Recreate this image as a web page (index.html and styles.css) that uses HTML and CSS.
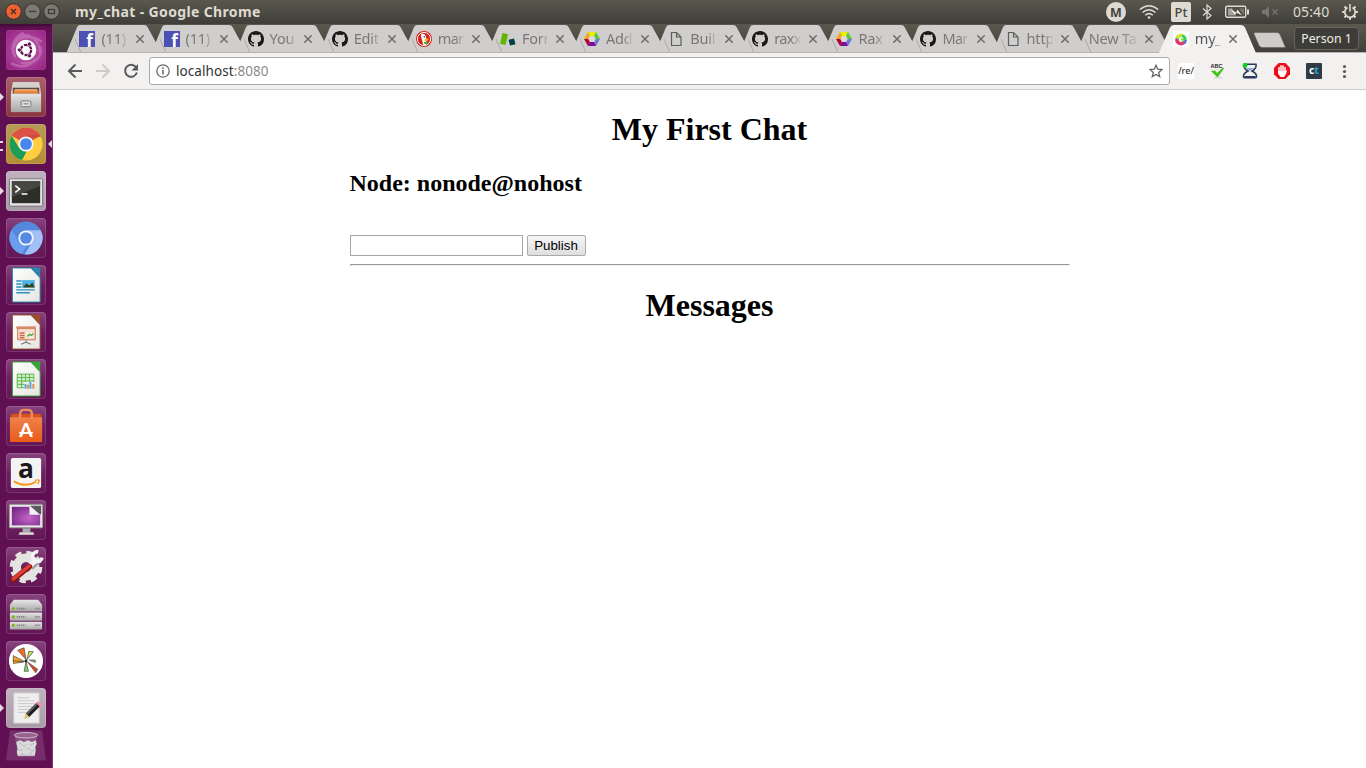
FILE: index.html
```html
<!DOCTYPE html>
<html lang="en">
<head>
<meta charset="utf-8">
<title>my_chat</title>
<link rel="stylesheet" href="styles.css">
</head>
<body>
<svg class="defs" width="0" height="0">
  <defs>
    <linearGradient id="silver" x1="0" y1="0" x2="0" y2="1"><stop offset="0" stop-color="#e6e6e6"/><stop offset="1" stop-color="#a6a6a6"/></linearGradient>
    <linearGradient id="paper" x1="0" y1="0" x2="1" y2="1"><stop offset="0" stop-color="#fff"/><stop offset="1" stop-color="#e4e4e0"/></linearGradient>
    <linearGradient id="bag" x1="0" y1="0" x2="0" y2="1"><stop offset="0" stop-color="#f0824a"/><stop offset="1" stop-color="#e95b1b"/></linearGradient>
    <radialGradient id="screen" cx=".6" cy=".6" r=".8"><stop offset="0" stop-color="#c366c9"/><stop offset="1" stop-color="#6e2180"/></radialGradient>
    <radialGradient id="swirl" cx=".5" cy=".5" r=".6"><stop offset="0" stop-color="#d48bcb"/><stop offset="1" stop-color="#9b2587"/></radialGradient>
  </defs>
  <symbol id="fb" viewBox="0 0 16 16"><rect width="16" height="16" fill="#4e50b4"/><text x="7.200" y="15.500" font-family="Open Sans" font-weight="700" font-size="17" fill="#fff">f</text></symbol>
  <symbol id="gh" viewBox="0 0 16 16"><path fill="#1b1817" d="M8 0C3.58 0 0 3.58 0 8c0 3.54 2.29 6.53 5.47 7.59.4.07.55-.17.55-.38 0-.19-.01-.82-.01-1.49-2.01.37-2.53-.49-2.69-.94-.09-.23-.48-.94-.82-1.13-.28-.15-.68-.52-.01-.53.63-.01 1.08.58 1.23.82.72 1.21 1.87.87 2.33.66.07-.52.28-.87.51-1.07-1.78-.2-3.64-.89-3.64-3.95 0-.87.31-1.59.82-2.15-.08-.2-.36-1.02.08-2.12 0 0 .67-.21 2.2.82.64-.18 1.32-.27 2-.27.68 0 1.36.09 2 .27 1.53-1.04 2.2-.82 2.2-.82.44 1.1.16 1.92.08 2.12.51.56.82 1.27.82 2.15 0 3.07-1.87 3.75-3.65 3.95.29.25.54.73.54 1.48 0 1.07-.01 1.93-.01 2.2 0 .21.15.46.55.38A8.013 8.013 0 0016 8c0-4.42-3.58-8-8-8z"/></symbol>
  <symbol id="duck" viewBox="0 0 16 16"><circle cx="8" cy="8" r="8" fill="#d8201c"/><circle cx="8" cy="8" r="6.6" fill="#d8201c" stroke="#fff" stroke-width="1"/><path d="M5 3.2c2-1.200 5 .2 5 3.300l.5 2-.5 5.800-2.600-.2C6.600 10.500 4.800 6.500 5 3.200z" fill="#fff"/><path d="M8.500 8l4.500-.6-1.500 2.400-3 .3z" fill="#f9bd12"/><path d="M8 11l3.500-.5v2.700L8 12.800z" fill="#4cab3c"/><circle cx="8.300" cy="5.900" r=".8" fill="#234e9b"/></symbol>
  <symbol id="form" viewBox="0 0 16 16"><path d="M2.500 2L8 3.200 5.500 14 0 12.800z" fill="#62b400"/><path d="M8.500 8.700l5.500-1.200 1.500 5.700-5.500 1.300z" fill="#003f48"/></symbol>
  <symbol id="hex" viewBox="0 0 16 16"><path d="M4 1h8l-2 4H6z" fill="#e9f000"/><path d="M12 1l4 7h-4.500L10 5z" fill="#5ac83a"/><path d="M16 8l-4 7-2-4 1.500-3z" fill="#6b7bd0"/><path d="M12 15H4l2-4h4z" fill="#7b0a9b"/><path d="M4 15L0 8h4.500L6 11z" fill="#b5002f"/><path d="M0 8l4-7 2 4-1.500 3z" fill="#f0a814"/><path d="M6 5h4l1.500 3-1.500 3H6L4.500 8z" fill="#dcdad8"/></symbol>
  <symbol id="doc" viewBox="0 0 16 16"><path d="M3.500 1.500h5l4.500 4.500v8.500H3.500z M8.500 1.500v4.500H13" fill="none" stroke="#5d5d5d" stroke-width="1.200"/></symbol>
  <symbol id="x" viewBox="0 0 8 8"><path d="M.3.300l7.400 7.400M7.700.300l-7.400 7.400" stroke="#6f6d6b" stroke-width="1.500" fill="none"/></symbol>
  <symbol id="shape" viewBox="0 0 98 28"><path d="M0 28L10.500 2.500Q11.500 0 14 0H80Q83 0 84 2.500L98 28z" fill="#d0cecc"/><path d="M8.500 14.500L14.500 28" stroke="#aaa8a5" fill="none"/></symbol>
</svg>

<header class="panel">
  <div class="winbtns">
    <svg width="58" height="20" viewBox="0 0 58 20"><circle cx="8.500" cy="9.500" r="7.800" fill="#ed6134" stroke="#33322d"/><path d="M6 7l5 5M11 7l-5 5" stroke="#47301f" stroke-width="1.400"/><circle cx="27.500" cy="9.500" r="7.800" fill="#7b7a72" stroke="#33322d"/><path d="M24 9.500h7" stroke="#3b3a36" stroke-width="1.300"/><circle cx="46.500" cy="9.500" r="7.800" fill="#7b7a72" stroke="#33322d"/><rect x="43.500" y="7.500" width="6" height="4" fill="none" stroke="#3b3a36" stroke-width="1.200"/></svg>
  </div>
  <span class="wintitle">my_chat - Google Chrome</span>
  <div class="tray">
    <svg class="mega" width="20" height="20" viewBox="0 0 20 20"><circle cx="10" cy="10" r="10" fill="#dfdbd2"/><text x="10" y="14.500" text-anchor="middle" font-family="Open Sans" font-weight="700" font-size="12.500" fill="#45443f">M</text></svg>
    <svg class="wifi" width="20" height="16" viewBox="0 0 20 16" fill="none" stroke="#dfdbd2" stroke-width="1.500"><path d="M.8 5.500Q10-2 19.200 5.500M3.500 8.500Q10 3 16.500 8.500M6.200 11.300q3.800-3.300 7.600 0"/><circle cx="10" cy="13.500" r="1.300" fill="#dfdbd2" stroke="none"/></svg>
    <span class="kbd">Pt</span>
    <svg class="bt" width="12" height="16" viewBox="0 0 12 16" fill="none" stroke="#dfdbd2" stroke-width="1.200"><path d="M2 4.500l8 7L6 15V1l4 3.500-8 7"/></svg>
    <svg class="bat" width="24" height="14" viewBox="0 0 24 14"><rect x=".7" y="1.200" width="20" height="11" rx="1.500" fill="none" stroke="#dfdbd2" stroke-width="1.400"/><path d="M22 4.500h2v5h-2z" fill="#dfdbd2"/><path d="M3 3.500h4l4 7H3z" fill="#a3a199"/><path d="M14 3.500h5v7z" fill="#77756e"/><path d="M5 3.500l6 4 1.500-3L17 10.500l-5.500-2.800-1.500 2.300z" fill="#eeeae0"/></svg>
    <svg class="mute" width="18" height="14" viewBox="0 0 18 14"><path d="M1 5h3l4-4v12L4 9H1z" fill="#77756e"/><path d="M11.500 4.500l5 5M16.500 4.500l-5 5" stroke="#77756e" stroke-width="1.300"/></svg>
    <span class="clock">05:40</span>
    <svg class="gear" width="18" height="18" viewBox="0 0 18 18" fill="none" stroke="#dfdbd2"><path d="M6.500 4.500a5.200 5.200 0 1 0 5 0" stroke-width="1.700"/><path d="M9 1v7.500" stroke-width="1.600"/><path d="M1.200 9h2.300M14.500 9h2.300M3.500 3.500l1.700 1.700M14.500 3.500l-1.700 1.700M3.500 14.500l1.700-1.700M14.500 14.500l-1.700-1.700M9 14.500v2.300" stroke-width="2"/></svg>
  </div>
</header>

<div class="desktop">
  <nav class="launcher">
    <div class="tile dash"><svg viewBox="0 0 41 41"><rect width="41" height="41" fill="url(#swirl)" opacity=".6"/><path d="M8 18C10 6 24 4 37 12M35 17c3 12-8 19-20 17M10 28C3 18 9 7 18 3M30 30c-7 9-16 9-25 4M13 6c11-3 21 3 22 17" fill="none" stroke="#e3a9da" stroke-width="2.500" opacity=".35"/><circle cx="20.500" cy="20.500" r="10.500" fill="#fff"/><circle cx="20.500" cy="20.500" r="5.300" fill="none" stroke="#5e1150" stroke-width="2.400" stroke-dasharray="9.600 1.500"/><g fill="#5e1150" stroke="#fff" stroke-width=".7"><circle cx="13.700" cy="20.500" r="2.100"/><circle cx="24" cy="14.500" r="2.100"/><circle cx="24" cy="26.500" r="2.100"/></g></svg></div>
    <div class="tile files run"><svg viewBox="0 0 41 41"><path d="M7 5h27l2 12H5z" fill="#d5d2cd"/><path d="M7 11h27v7H7z" fill="#5b4a40"/><path d="M8 13.500h25V17H8z" fill="#ef8337"/><path d="M9 12.500h23V14H9z" fill="#f6b98a"/><path d="M5 17h31v19H5z" fill="url(#silver)"/><rect x="15.500" y="24.500" width="10" height="6" rx="1" fill="#ddd" stroke="#797979"/><path d="M18 27.500h5" stroke="#777"/></svg></div>
    <div class="tile chrome run multi active"><svg viewBox="0 0 41 41"><circle cx="20.500" cy="20.500" r="17" fill="#ffcd40"/><path d="M20.500 20.500L5.800 12a17 17 0 0 1 29.400 0z" fill="#dc5246"/><path d="M5.800 12l7.700 12.500 7.500 4-4.500 8.500A17 17 0 0 1 5.800 12z" fill="#199d59"/><path d="M20.500 12.500H35.500" stroke="#b7473b"/><circle cx="20.500" cy="20.500" r="7.800" fill="#f3f3f3"/><circle cx="20.500" cy="20.500" r="6" fill="#4587ef"/></svg></div>
    <div class="tile term run"><svg viewBox="0 0 41 41"><rect x="3.500" y="8" width="34" height="28" rx="1" fill="#e4e4e4" stroke="#777"/><rect x="6" y="10.500" width="29" height="22.500" fill="#2d2d2a"/><path d="M6 10.500h29v5L6 27z" fill="#464642"/><path d="M9.500 15l4.500 3.500-4.500 3.500M16 23.500h6" fill="none" stroke="#fff" stroke-width="1.600"/></svg></div>
    <div class="tile"><svg viewBox="0 0 41 41"><circle cx="20.500" cy="20.500" r="17" fill="#5488dc"/><path d="M20.500 12.500h15A17 17 0 0 1 19 37.400l8-13z" fill="#a2c0f6"/><path d="M5.800 12l7.700 12.500 7.500 4-4.500 8.500A17 17 0 0 1 5.800 12z" fill="#6b9eee"/><circle cx="20.500" cy="20.500" r="7.800" fill="#f4f7ff"/><circle cx="20.500" cy="20.500" r="6" fill="#568be1"/></svg></div>
    <div class="tile"><svg viewBox="0 0 41 41"><path d="M6.500 3h19L35 13v25H6.500z" fill="url(#paper)" stroke="#25789b"/><path d="M25 2.500h10V13z" fill="#2a86ad"/><path d="M16.500 15.500h13V23h-13z" fill="#4fb2e5"/><path d="M17 23l4-4 3 2 3-3 2.500 5z" fill="#34451e"/><path d="M10.500 16.500H16M10.500 19.500H16M10.500 22.500H16M10.500 25.500h19M10.500 28.500h14" stroke="#2991bd" stroke-width="1.500"/></svg></div>
    <div class="tile"><svg viewBox="0 0 41 41"><path d="M6.500 3h19L35 13v25H6.500z" fill="url(#paper)" stroke="#8d4326"/><path d="M25 2.500h10V13z" fill="#9c4e2a"/><path d="M12 17h18v11.500H12z" fill="#f6dfd1" stroke="#c96c46"/><path d="M10.500 16h20" stroke="#d98967" stroke-width="2.500"/><path d="M14 21.500h5M14 24h5M14 26.500h5" stroke="#c96c46" stroke-width="1.500"/><path d="M21 21h7v5h-7z" fill="#e9f3dd"/><path d="M22 25l2-2 2 1 2-2" stroke="#55a548" fill="none" stroke-width="1.500"/><path d="M20.500 29v2l-5 2M20.500 31l5 2" stroke="#666" fill="none"/></svg></div>
    <div class="tile"><svg viewBox="0 0 41 41"><path d="M6.500 3h19L35 13v25H6.500z" fill="url(#paper)" stroke="#2d962e"/><path d="M25 2.500h10V13z" fill="#39a638"/><path d="M11.500 15.500h17v14h-17z M11.500 19h17M11.500 22.500h17M11.500 26h17M16 15.500v14M20 15.500v14M24 15.500v14" fill="#d2efc8" stroke="#5ab44e"/><path d="M18.500 23.500h11v7.500h-11z" fill="#eee"/><path d="M20 30.500v-5M25 30.500v-7" stroke="#46a7de" stroke-width="2"/><path d="M22.500 30.500v-4M28 30.500v-5" stroke="#e98c46" stroke-width="2"/></svg></div>
    <div class="tile"><svg viewBox="0 0 41 41"><path d="M5 9l2-1h27l2 1v3H5z" fill="#d9511b"/><path d="M4 11.500h33V37H4z" fill="url(#bag)"/><path d="M14.500 13V8q0-4 4-4h4q4 0 4 4v5" fill="none" stroke="#f0895e" stroke-width="2.500"/><text x="20.500" y="32" text-anchor="middle" font-family="Lato" font-weight="700" font-size="20" fill="#fff">A</text><path d="M13.500 27.500h14" stroke="#fff" stroke-width="1.800"/></svg></div>
    <div class="tile"><svg viewBox="0 0 41 41"><rect x="5" y="5" width="31" height="31" rx="2" fill="#f3f3f3"/><text x="20.500" y="25.500" text-anchor="middle" font-family="Open Sans" font-weight="700" font-size="27" fill="#1a1a1a">a</text><path d="M8 29q12 7 23 .5" fill="none" stroke="#f79a1c" stroke-width="2"/><path d="M29.500 28q5-1 4.500.500t-1.500 3.500" fill="none" stroke="#f79a1c" stroke-width="1.400"/></svg></div>
    <div class="tile"><svg viewBox="0 0 41 41"><rect x="3.500" y="4.500" width="34" height="24" rx="1" fill="#e7e7e7" stroke="#999"/><rect x="6" y="7" width="29" height="19" fill="url(#screen)"/><path d="M24 6h12v9z" fill="#5a5a5a"/><path d="M24 5.500v9.500h11z" fill="#f2f2f2"/><path d="M17 29h8v4h-8z" fill="#aaa"/><path d="M14 33h14l1 2.500H13z" fill="#ddd"/></svg></div>
    <div class="tile"><svg viewBox="0 0 41 41"><g stroke="#e3e3e0" fill="none"><circle cx="20.500" cy="20.500" r="9.500" stroke-width="8.500"/><circle cx="20.500" cy="20.500" r="14.500" stroke-width="4.500" stroke-dasharray="6.390 5"/></g><path d="M25 21L33 14" stroke="#999" stroke-width="6.500"/><path d="M24 20L32 12.500" stroke="#f4f4f4" stroke-width="5"/><path d="M33 5a5 5 0 1 0 4 6" fill="none" stroke="#f4f4f4" stroke-width="3.600"/><path d="M24 20L7.500 33.500" stroke="#8c1712" stroke-width="5.500" stroke-linecap="round"/><path d="M24 19.200L7.500 32.700" stroke="#db3f34" stroke-width="3.500" stroke-linecap="round"/></svg></div>
    <div class="tile"><svg viewBox="0 0 41 41"><g fill="url(#silver)"><path d="M8 6h25l4 5v7H4v-7z"/><rect x="4" y="19" width="33" height="8.500" rx="1"/><rect x="4" y="28.500" width="33" height="8" rx="1"/></g><g fill="#78b600"><circle cx="7.500" cy="15" r="1.500"/><circle cx="7.500" cy="23.500" r="1.500"/><circle cx="7.500" cy="32" r="1.500"/></g><path d="M11 15h9M11 23.500h9M11 32h9M30 15h5M30 23.500h5M30 32h5" stroke="#888" stroke-width="1.700" stroke-dasharray="1.500 .6"/></svg></div>
    <div class="tile"><svg viewBox="0 0 41 41"><circle cx="20.500" cy="20.500" r="17.500" fill="#fff"/><g stroke="#444" stroke-width=".7"><path d="M20.500 19L12 9.500 18.500 7z" fill="#f46c27"/><path d="M21.500 19l2-8.500 4.500.5z" fill="#c3e04c"/><path d="M19 21H7.500V15z" fill="#f7a51c"/><path d="M18 21.500L7.500 23V20z" fill="#f7a51c"/><path d="M20.500 21.500l2.500 9.500h-4.500z" fill="#7bd35d"/><path d="M22 21.500L32.500 29l-2 3.500z" fill="#e7451d"/><path d="M24 19.500h6v2.500z" fill="#8cd86b"/></g><circle cx="20.500" cy="20.500" r="1.500" fill="#232323"/></svg></div>
    <div class="tile edit run"><svg viewBox="0 0 41 41"><path d="M8 5h26v31H8z" fill="#eee" stroke="#ccc"/><path d="M12 10h12M12 13h17M12 16h17M12 19h15M12 22h14M12 25h9" stroke="#c8c8c8"/><path d="M22 28L33 17" stroke="#1d1d1d" stroke-width="5"/><path d="M21 27L31.500 16.500" stroke="#64635f" stroke-width="1.800"/><path d="M30.500 15l3-1.500 4 3.500-2 3z" fill="#ec92b8"/><path d="M20 26l4 4-5.500 2z" fill="#dfc46f"/></svg></div>
    <div class="tile trash"><svg viewBox="0 0 41 31"><path d="M4 0h33l4 31H0z" fill="#762d6a"/><path d="M9 4l3 23h17l3-23z" fill="#8a5283"/><ellipse cx="20.500" cy="5" rx="12" ry="2.800" fill="#97648f" stroke="#d0bfcd"/><path d="M10.500 12l4-2 4 2 4-2 4 2 4-2 1 4-1.500 3 .5 4-1 5H12l-1-4 1-3z" fill="#dadada"/><g fill="none" stroke="#b4b4b4"><path d="M13 14q2-2 4 1t4-1M24 14q2 2 5-1M13 20q3 2 4-1M21 19q3-2 4 1t4 0M15 25q2-2 4 0M23 25q2-3 4-1"/></g></svg></div>
  </nav>

  <div class="browser">
    <div class="tabstrip">
      <div class="tab"><svg class="bg"><use href="#shape"/></svg><svg class="fav"><use href="#fb"/></svg><span class="label">(11)</span><svg class="close"><use href="#x"/></svg></div>
      <div class="tab"><svg class="bg"><use href="#shape"/></svg><svg class="fav"><use href="#fb"/></svg><span class="label">(11)</span><svg class="close"><use href="#x"/></svg></div>
      <div class="tab"><svg class="bg"><use href="#shape"/></svg><svg class="fav"><use href="#gh"/></svg><span class="label">You</span><svg class="close"><use href="#x"/></svg></div>
      <div class="tab"><svg class="bg"><use href="#shape"/></svg><svg class="fav"><use href="#gh"/></svg><span class="label">Edit</span><svg class="close"><use href="#x"/></svg></div>
      <div class="tab"><svg class="bg"><use href="#shape"/></svg><svg class="fav"><use href="#duck"/></svg><span class="label tight">mar</span><svg class="close"><use href="#x"/></svg></div>
      <div class="tab"><svg class="bg"><use href="#shape"/></svg><svg class="fav"><use href="#form"/></svg><span class="label">Forr</span><svg class="close"><use href="#x"/></svg></div>
      <div class="tab"><svg class="bg"><use href="#shape"/></svg><svg class="fav"><use href="#hex"/></svg><span class="label">Add</span><svg class="close"><use href="#x"/></svg></div>
      <div class="tab"><svg class="bg"><use href="#shape"/></svg><svg class="fav"><use href="#doc"/></svg><span class="label">Buil</span><svg class="close"><use href="#x"/></svg></div>
      <div class="tab"><svg class="bg"><use href="#shape"/></svg><svg class="fav"><use href="#gh"/></svg><span class="label tight">raxx</span><svg class="close"><use href="#x"/></svg></div>
      <div class="tab"><svg class="bg"><use href="#shape"/></svg><svg class="fav"><use href="#hex"/></svg><span class="label">Rax</span><svg class="close"><use href="#x"/></svg></div>
      <div class="tab"><svg class="bg"><use href="#shape"/></svg><svg class="fav"><use href="#gh"/></svg><span class="label tight">Mar</span><svg class="close"><use href="#x"/></svg></div>
      <div class="tab"><svg class="bg"><use href="#shape"/></svg><svg class="fav"><use href="#doc"/></svg><span class="label">http</span><svg class="close"><use href="#x"/></svg></div>
      <div class="tab wide"><svg class="bg"><use href="#shape"/></svg><span class="label">New Ta</span><svg class="close"><use href="#x"/></svg></div>
      <div class="tab current"><svg class="bg" viewBox="0 0 98 28"><path d="M0 28L11 2.500Q12 0 14.500 0H82Q85 0 86 2.500L97 28z" fill="#f2f1f0"/></svg><svg class="fav" viewBox="0 0 16 16"><rect width="16" height="16" fill="#fbfbfa"/><circle cx="8" cy="8.500" r="4" fill="none" stroke="#35d552" stroke-width="3.200"/><path d="M4 8a4 4 0 0 0 7 3.300" fill="none" stroke="#e8336e" stroke-width="3.200"/><path d="M4 7a4 4 0 0 1 5-2.500" fill="none" stroke="#e6e02c" stroke-width="3"/><path d="M12.800 9a4 4 0 0 1-2 3.500" fill="none" stroke="#6a58e0" stroke-width="2"/><path d="M8 8.500h3" stroke="#7adf40" stroke-width="2"/></svg><span class="label">my_</span><svg class="close"><use href="#x"/></svg></div>
      <svg class="newtab" width="34" height="16" viewBox="0 0 34 16"><path d="M2.500.500H24Q26 .5 27 2.500L32.500 15.500H9.500Q7 15.500 6 13.500L1 2Q.5.500 2.500.500z" fill="#cecdca" stroke="#605f56" stroke-width=".6"/></svg>
      <span class="person">Person 1</span>
    </div>
    <div class="toolbar">
      <svg class="nav" viewBox="0 0 28 36" fill="none" stroke="#5a5a5a" stroke-width="2"><path d="M21 18H8M14.500 11.500L8 18l6.500 6.500"/></svg>
      <svg class="nav" viewBox="0 0 28 36" fill="none" stroke="#cdcbc9" stroke-width="2"><path d="M7 18h13M13.500 11.500L20 18l-6.500 6.500"/></svg>
      <svg class="nav" viewBox="0 0 28 36" fill="none" stroke="#5a5a5a" stroke-width="2"><path d="M18.800 14a6 6 0 1 0 1.100 5.500"/><path d="M21 11v6.500h-6.500z" fill="#5a5a5a" stroke="none"/></svg>
      <div class="omnibox">
        <svg width="14" height="14" viewBox="0 0 14 14"><circle cx="7" cy="7" r="6.200" fill="none" stroke="#6b6b6b" stroke-width="1.300"/><path d="M7 6v4.500M7 3.300v1.600" stroke="#6b6b6b" stroke-width="1.600"/></svg>
        <span class="url">localhost<span class="port">:8080</span></span>
        <svg class="star" width="14" height="14" viewBox="0 0 14 14"><path d="M7 1.300l1.700 3.900 4.200.4-3.200 2.800 1 4.200L7 10.400l-3.700 2.200 1-4.200L1.100 5.600l4.200-.4z" fill="none" stroke="#666" stroke-width="1.300"/></svg>
      </div>
      <div class="ext"><span class="re">/re/</span></div>
      <div class="ext"><svg width="16" height="16" viewBox="0 0 16 16"><path d="M1 8l4-.5 2 2.500 6-5.500 1 1L7.500 14.500z" fill="#3fc31b"/><path d="M4 14.800h8" stroke="#ccc"/><text x="6.500" y="5" text-anchor="middle" font-family="Liberation Sans" font-size="5.500" font-weight="700" fill="#222">ABC</text></svg></div>
      <div class="ext"><svg width="16" height="16" viewBox="0 0 16 16"><path d="M2 1.200h12Q15 5.500 10 8q5 2.500 4.500 6-.3.800-1.500.8H3q-1.200 0-1.500-.8Q1 10.500 6 8 1 5.500 2 1.200z" fill="#f2f1f0" stroke="#273a5c" stroke-width="1.500"/><path d="M2.500 13h11v1.800h-11z" fill="#273a5c"/><path d="M4 5h8L8 7.500z" fill="#8ba5cf"/><circle cx="3" cy="2.500" r="2.400" fill="#0bd51b"/></svg></div>
      <div class="ext"><svg width="16" height="16" viewBox="0 0 16 16"><path d="M4.700 0h6.600L16 4.700v6.600L11.300 16H4.700L0 11.300V4.700z" fill="#ee0c18"/><path d="M5 10V4.500M7 9V2.800M9 9V3M11 9V4.500" stroke="#fff" stroke-width="1.500" stroke-linecap="round"/><path d="M4.300 8h7.500l1.400-1.500L12 11l-2 3H6.500l-2.200-3z" fill="#fff"/></svg></div>
      <div class="ext"><span class="ct">c<b>t</b></span></div>
      <svg class="nav" viewBox="0 0 28 36" fill="#5a5a5a"><circle cx="14.500" cy="13.500" r="1.600"/><circle cx="14.500" cy="18.500" r="1.600"/><circle cx="14.500" cy="23.500" r="1.600"/></svg>
    </div>
    <main class="page">
      <div class="content">
        <h1>My First Chat</h1>
        <h2>Node: nonode@nohost</h2>
        <form class="publish"><input type="text"><button type="button">Publish</button></form>
        <hr>
        <h1>Messages</h1>
      </div>
    </main>
  </div>
</div>
</body>
</html>
```
FILE: styles.css
```css
* { box-sizing: border-box; }
html, body { height: 100%; }
body { margin: 0; overflow: hidden; background: #fff; display: flex; flex-direction: column; font-family: "Noto Sans", sans-serif; }
svg { display: block; flex: none; }
.defs { position: absolute; }

.panel { height: 24px; flex: none; display: flex; align-items: center; padding: 0 7px 0 5px; background: linear-gradient(#5a584e, #3e3d38); color: #dfdbd2; }
.winbtns { width: 70px; flex: none; }
.wintitle { font-weight: 700; font-size: 14px; line-height: 20px; letter-spacing: 0.36px; white-space: nowrap; }
.tray { margin-left: auto; display: flex; align-items: center; }
.wifi { margin-left: 13px; }
.kbd { margin-left: 12px; width: 20px; height: 20px; border-radius: 2px; background: #dfdbd2; color: #45443f; font-size: 13px; font-weight: 500; line-height: 20px; text-align: center; }
.bt { margin-left: 10px; }
.bat, .mute { margin-left: 12px; }
.clock { margin-left: 14px; width: 37px; font-size: 14px; line-height: 22px; letter-spacing: 0.1px; white-space: nowrap; }
.gear { margin-left: 11px; }

.desktop { flex: 1; display: flex; min-height: 0; }
.launcher { width: 53px; flex: none; display: flex; flex-direction: column; gap: 7px; padding: 6px 0 0 6px; background: linear-gradient(#3d0a34, #5f0f52 4px); border-right: 1px solid #7c3b72; }
.tile { position: relative; width: 40px; height: 40px; flex: none; border-radius: 4px; background: linear-gradient(#87447d, #6d2060 50%, #641757); box-shadow: inset 0 0 0 1px rgba(255,255,255,.13); }
.tile svg { width: 40px; height: 40px; }
.dash { background: #9c2b89; }
.dash svg { border-radius: 4px; }
.files { background: linear-gradient(#a8606c, #8b343f); }
.chrome { background: linear-gradient(#b79a58, #b48f36); }
.term, .edit { background: linear-gradient(#bfb1bd, #a99ba7); }
.trash { height: 31px; margin-top: -5px; background: none; box-shadow: none; }
.trash svg { height: 31px; }
.run::before { content: ""; position: absolute; left: -6px; top: 16px; border: 4px solid transparent; border-left-color: #e2d8e0; border-right: 0; }
.multi::before { top: 17px; width: 3px; height: 6px; border: solid #e2d8e0; border-width: 2px 0; }
.active::after { content: ""; position: absolute; right: -6px; top: 16px; border: 4px solid transparent; border-right-color: #e2d8e0; border-left: 0; }

.browser { flex: 1; min-width: 0; display: flex; flex-direction: column; }
.tabstrip { height: 29px; flex: none; display: flex; padding: 1px 7px 0 12.4px; background: linear-gradient(#5a584e, #3f3e39); box-shadow: inset 0 -1px #b5b3b0; }
.tab { position: relative; width: 84.12px; height: 28px; flex: none; display: flex; align-items: center; padding-left: 14px; }
.bg { position: absolute; left: 0; top: 0; width: 98px; height: 27px; }
.fav { position: relative; width: 16px; height: 16px; margin-right: 6px; }
.label { position: relative; width: 26px; flex: none; white-space: nowrap; color: #7a7876; font-size: 14.5px; line-height: 22px; padding-bottom: 2px; letter-spacing: -0.2px; -webkit-mask-image: linear-gradient(90deg, #000 65%, rgba(0,0,0,.15)); mask-image: linear-gradient(90deg, #000 65%, rgba(0,0,0,.15)); }
.tight { letter-spacing: -0.7px; }
.wide .label { width: 48px; }
.close { position: relative; width: 8px; height: 8px; margin-left: 8.500px; }
.current .bg { height: 28px; }
.current .label { color: #555; }
.newtab { position: relative; margin: 7px 0 0 10.500px; }
.person { position: relative; margin: 2px 0 0 auto; width: 65px; height: 23px; border: 1px solid #66645b; border-radius: 4px; background: #3d3c38; color: #f0eee9; font-size: 12.3px; line-height: 21px; text-align: center; white-space: nowrap; }

.toolbar { height: 37px; flex: none; display: flex; align-items: center; padding: 0 8px; background: #f2f1f0; border-bottom: 1px solid #cfcdcb; }
.nav { width: 28px; height: 36px; }
.omnibox { flex: 1; height: 28px; margin-left: 4px; padding: 0 6px; display: flex; align-items: center; background: #fff; border: 1px solid #acaaa8; border-radius: 3px; }
.url { margin-left: 6px; font-size: 13.5px; letter-spacing: 0.08px; color: #333; }
.port { color: #8c8c8c; }
.star { margin-left: auto; }
.ext { width: 32px; flex: none; display: flex; justify-content: center; }
.re { width: 16px; height: 16px; background: #fff; color: #333; font-size: 9px; font-weight: 500; line-height: 15px; text-align: center; white-space: nowrap; }
.ct { width: 16px; height: 16px; border-radius: 1px; background: #2f3a45; color: #fff; font: 700 10px/15px "Noto Sans", sans-serif; text-align: center; }
.ct b { color: #1aa0c4; }

.page { flex: 1; background: #fff; display: flow-root; font-family: "Liberation Serif", serif; }
.content { width: 720px; margin: 0 auto; color: #000; }
.content h1 { font-size: 32px; line-height: 37px; margin: 21.4px 0; text-align: center; }
.content h2 { font-size: 24px; line-height: 27px; margin: 0 0 38px; }
.publish { display: flex; gap: 4px; margin: 0; }
.publish input { width: 173px; height: 21px; border: 1px solid #a6a6a6; padding: 1px; background: #fff; }
.publish button { width: 59px; height: 21px; padding: 0; border: 1px solid #a9a9a9; border-radius: 2px; background: linear-gradient(#f6f6f6, #dedede); color: #000; font: 13.333px/15px "Liberation Sans", sans-serif; }
.content hr { height: 2px; margin: 8px 0 0; border: 1px solid; border-color: #9a9a9a #eee #eee #9a9a9a; }
```
